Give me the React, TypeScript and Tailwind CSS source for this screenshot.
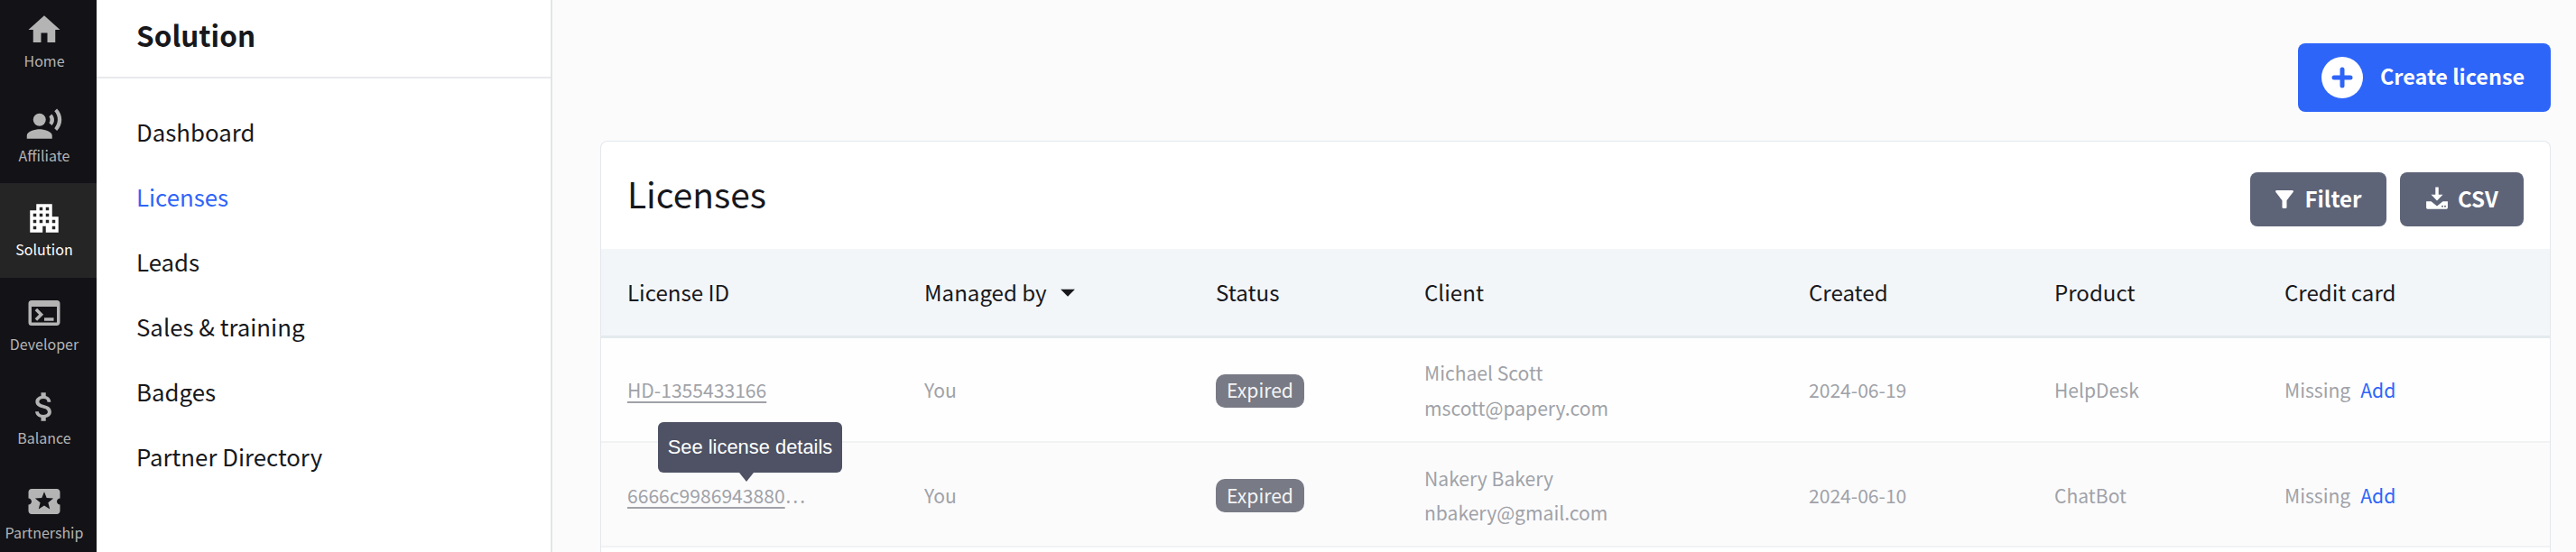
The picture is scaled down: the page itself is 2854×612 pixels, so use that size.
import type { ReactNode } from "react";
import {
  MdApartment,
  MdArrowDropDown,
  MdAttachMoney,
  MdFilterAlt,
  MdHome,
  MdLocalActivity,
  MdRecordVoiceOver,
  MdTerminal,
} from "react-icons/md";

const railItems = [
  { label: "Home", icon: MdHome },
  { label: "Affiliate", icon: MdRecordVoiceOver },
  { label: "Solution", icon: MdApartment, active: true },
  { label: "Developer", icon: MdTerminal },
  { label: "Balance", icon: MdAttachMoney },
  { label: "Partnership", icon: MdLocalActivity },
];

const navItems = ["Dashboard", "Licenses", "Leads", "Sales & training", "Badges", "Partner Directory"];

const columns = "grid grid-cols-[329px_323px_231px_426px_272px_255px_1fr] items-center pl-[29px]";

function Rail() {
  return (
    <aside className="w-[107px] shrink-0 bg-[#121217] -mt-[6px]">
      {railItems.map((item) => (
        <div
          key={item.label}
          className={`flex h-[104.5px] flex-col items-center pr-[9px] pt-[18px] ${
            item.active ? "bg-[#252526] text-white" : "text-[#b4b4b4]"
          }`}
        >
          <item.icon className="h-[42px] w-[42px]" />
          <span className="-mt-[1px] text-[16px] leading-[28px]">{item.label}</span>
        </div>
      ))}
    </aside>
  );
}

function SubNav() {
  return (
    <nav className="w-[505px] shrink-0 border-r-2 border-[#e2e4e6] bg-white text-[#17181c]">
      <div className="flex h-[87px] items-start border-b-2 border-[#e8eaec] pl-[44px] pt-[18px]">
        <h2 className="text-[31.5px] font-semibold leading-[40px]">Solution</h2>
      </div>
      <ul className="pt-[23px]">
        {navItems.map((item) => (
          <li
            key={item}
            className={`flex h-[72px] items-center pl-[44px] text-[25.8px] ${item === "Licenses" ? "text-[#2e65f9]" : ""}`}
          >
            {item}
          </li>
        ))}
      </ul>
    </nav>
  );
}

function GrayButton({ children, className }: { children: ReactNode; className: string }) {
  return (
    <button className={`flex h-[60px] items-center justify-center rounded-[8px] bg-[#5e6478] pb-[2px] text-[24px] font-semibold text-white ${className}`}>
      {children}
    </button>
  );
}

function ExportIcon() {
  return (
    <svg viewBox="0 0 24 24" className="h-[26px] w-[26px]" fill="currentColor">
      <path d="M10.4 0.500h3.200v7.500h4.400L12 14.200 6 8h4.400z" />
      <path d="M1 15h5l6 4.800L18 15h5v6.500a1.300 1.300 0 0 1-1.300 1.300H2.300A1.300 1.300 0 0 1 1 21.500z" />
      <circle cx="17.500" cy="20" r="0.900" fill="#5e6478" />
      <circle cx="20.300" cy="20" r="0.900" fill="#5e6478" />
    </svg>
  );
}

function Badge() {
  return (
    <span className="inline-flex h-[37px] w-[98px] items-center justify-center rounded-[10px] bg-[#787a85] text-[21.1px] text-[#f4f4f5]">
      Expired
    </span>
  );
}

function CreditCard() {
  return (
    <div className="flex gap-[11px]">
      <span className="text-[#a0a2a8]">Missing</span>
      <a className="text-[#2e65f9]">Add</a>
    </div>
  );
}

export default function App() {
  return (
    <div className="flex h-[612px] w-[2854px] overflow-hidden bg-[#fbfbfc] font-['Noto_Sans_CJK_JP','Noto_Sans',sans-serif]">
      <Rail />
      <SubNav />
      <main className="flex min-w-0 flex-1 flex-col pl-[53px] pr-[28px] pt-[48px]">
        <button className="ml-auto flex h-[76px] w-[280px] shrink-0 items-center whitespace-nowrap rounded-[8px] bg-[#2e65f9] pb-[2px] pl-[26px] text-[23.4px] font-semibold text-white">
          <svg viewBox="0 0 46 46" className="mr-[19px] mt-[2px] h-[46px] w-[46px]">
            <circle cx="23" cy="23" r="23" fill="#fff" />
            <path d="M23 14v18M14 23h18" stroke="#2e65f9" strokeWidth="5" strokeLinecap="round" />
          </svg>
          Create license
        </button>

        <section className="mt-[32px] flex-1 rounded-t-[8px] border border-b-0 border-[#e4e8ec] bg-white">
          <header className="flex h-[119px] items-start justify-between pl-[29px] pr-[29px] pt-[34px]">
            <h1 className="-mt-[3px] text-[38.9px] leading-[52px] text-[#17181c]">Licenses</h1>
            <div className="flex gap-[15px]">
              <GrayButton className="w-[151px] gap-[8px] pr-[5px]">
                <MdFilterAlt className="mt-[2px] h-[30px] w-[30px]" />
                Filter
              </GrayButton>
              <GrayButton className="w-[137px] gap-[10px]">
                <ExportIcon />
                CSV
              </GrayButton>
            </div>
          </header>

          <div className={`${columns} h-[99px] border-b-[3px] border-[#e4eaee] bg-[#f3f6f9] text-[24.1px] text-[#17181c]`}>
            <span>License ID</span>
            <span className="flex items-center">
              Managed by
              <MdArrowDropDown className="ml-[4px] h-[38px] w-[38px]" />
            </span>
            <span>Status</span>
            <span>Client</span>
            <span>Created</span>
            <span>Product</span>
            <span>Credit card</span>
          </div>

          <div className={`${columns} h-[116px] border-b-2 border-[#f1f2f4] bg-[#fefefe] pt-[2px] text-[21.1px] text-[#a0a2a8]`}>
            <a className="underline underline-offset-4">HD-1355433166</a>
            <span>You</span>
            <Badge />
            <div className="-mt-[2px] flex flex-col gap-[3px] leading-[36px]">
              <span>Michael Scott</span>
              <span>mscott@papery.com</span>
            </div>
            <span>2024-06-19</span>
            <span>HelpDesk</span>
            <CreditCard />
          </div>

          <div className={`${columns} h-[116px] border-b-2 border-[#f1f2f4] bg-[#fbfbfc] pt-[3px] text-[21.1px] text-[#a0a2a8]`}>
            <div className="relative">
              <div className="absolute bottom-[41px] left-[34px] w-[204px] rounded-[6px] bg-[#4e5264] py-[14px] text-center font-['Liberation_Sans',sans-serif] text-[21.9px] leading-[28px] text-white">
                See license details
                <span className="absolute -bottom-[10px] left-[90px] h-0 w-0 border-x-[8px] border-t-[10px] border-x-transparent border-t-[#4e5264]" />
              </div>
              <a className="underline underline-offset-4">6666c9986943880</a>…
            </div>
            <span>You</span>
            <Badge />
            <div className="-mt-[1px] flex flex-col gap-[2px] leading-[36px]">
              <span>Nakery Bakery</span>
              <span>nbakery@gmail.com</span>
            </div>
            <span>2024-06-10</span>
            <span>ChatBot</span>
            <CreditCard />
          </div>
        </section>
      </main>
    </div>
  );
}
